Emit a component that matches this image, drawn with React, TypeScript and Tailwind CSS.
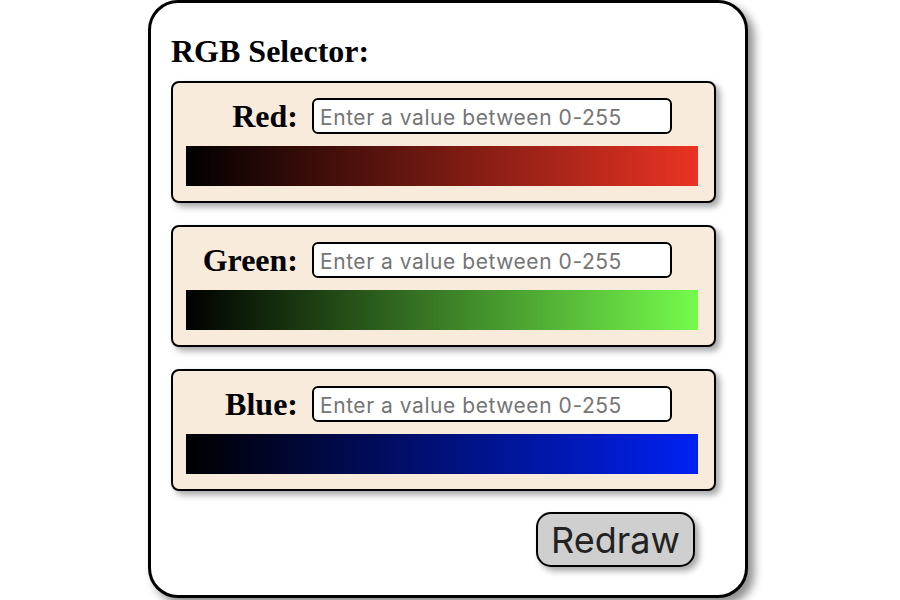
import React from "react";

const channels = [
  { name: "Red", grad: "bg-[linear-gradient(to_right,#000000,#ea3323)]" },
  { name: "Green", grad: "bg-[linear-gradient(to_right,#000000,#75fb4c)]" },
  { name: "Blue", grad: "bg-[linear-gradient(to_right,#000000,#0021f3)]" },
];

export default function App() {
  return (
    <div className="w-[900px] h-[600px] bg-white overflow-hidden">
      <div className="ml-[148px] w-[600px] h-[598px] border-[3px] border-black rounded-[30px] bg-white shadow-[6px_6px_10px_rgba(0,0,0,0.45)] pt-[30px] pl-[20px] flex flex-col">
        <h1 className="font-['Liberation_Serif',serif] font-bold text-[32px] leading-[36px] text-black mb-[12px]">
          RGB Selector:
        </h1>
        <div className="flex flex-col gap-[22px]">
          {channels.map((c) => (
            <div
              key={c.name}
              className="w-[545px] border-2 border-black rounded-[8px] bg-[#f8ebdc] shadow-[4px_4px_6px_rgba(0,0,0,0.35)] pt-[15px] pb-[15px] pl-[13px]"
            >
              <div className="flex items-start h-[36px]">
                <label className="w-[112px] mt-[1px] text-right font-['Liberation_Serif',serif] font-bold text-[32px] leading-[35px] text-black">
                  {c.name}:
                </label>
                <input
                  type="text"
                  placeholder="Enter a value between 0-255"
                  className="ml-[14px] w-[360px] h-[36px] border-2 border-black rounded-[6px] bg-white pl-[6px] pr-[6px] pt-[3px] font-['Inter',sans-serif] text-[21px] tracking-[0.55px] text-black placeholder:text-[#757575] outline-none"
                />
              </div>
              <div className={`mt-[12px] w-[512px] h-[40px] ${c.grad}`} />
            </div>
          ))}
        </div>
        <div className="w-[545px] flex justify-end pr-[21px] mt-[21px]">
          <button className="w-[159px] h-[55px] border-2 border-black rounded-[15px] bg-[#cfcfcf] shadow-[4px_4px_6px_rgba(0,0,0,0.35)] font-['Inter',sans-serif] text-[36px] leading-none text-[#222222]">
            Redraw
          </button>
        </div>
      </div>
    </div>
  );
}
